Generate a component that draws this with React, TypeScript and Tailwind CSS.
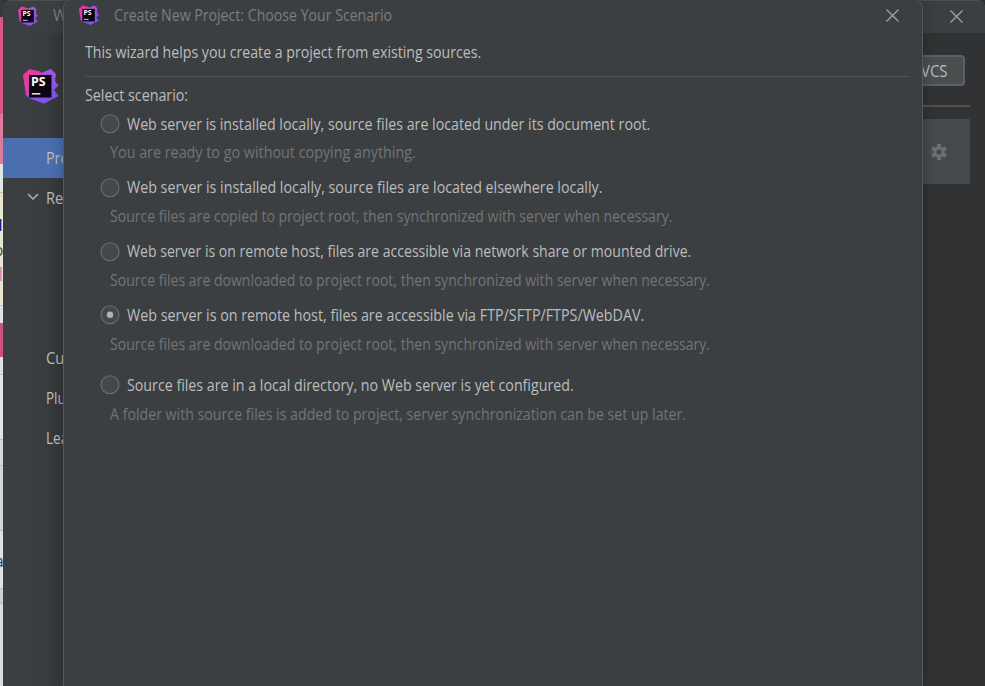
import React from 'react';

function Logo({ size }: { size: number }) {
  return (
    <svg width={size} height={size} viewBox="0 0 36 36" className="block shrink-0">
      <defs>
        <linearGradient id="psPink" x1="0" y1="0" x2="1" y2="1">
          <stop offset="0" stopColor="#f5358f" />
          <stop offset="0.45" stopColor="#dd3cb0" />
          <stop offset="1" stopColor="#8a4df5" />
        </linearGradient>
        <linearGradient id="psViolet" x1="0" y1="0" x2="0" y2="1">
          <stop offset="0" stopColor="#a955de" />
          <stop offset="1" stopColor="#6b57f5" />
        </linearGradient>
      </defs>
      <path d="M19 4.5 28 1 33 6 32 13 35.5 17.5 31 22 35.5 28 21 35.5 8 30 16 9Z" fill="url(#psViolet)" />
      <path d="M0 7 6.5 1 17 3.5 20 6 18 14 9 30.5 3 27.5Z" fill="url(#psPink)" />
      <path d="M3 27.5 18 24 35 28 21 35.5 8 31Z" fill="#8052ea" />
      <rect x="6" y="7" width="22.5" height="22.5" fill="#0c0512" />
      <rect x="8.8" y="25" width="8.5" height="1.6" fill="#dedede" />
      <text x="8" y="18" fontFamily="Open Sans, sans-serif" fontSize="12.4" fontWeight="700" fill="#fff">PS</text>
    </svg>
  );
}

function Close() {
  return (
    <svg width="13" height="13" viewBox="0 0 13 13" className="block shrink-0" stroke="#a6a8a9" strokeWidth="1.15">
      <path d="M.5.5 12.5 12.5M12.5.5.5 12.5" />
    </svg>
  );
}

const strip = [
  'h-[17px] bg-[#39393b]',
  'h-[97px] bg-[#da5488]',
  'h-[50px] bg-[#dc7ba0]',
  'h-[28px] bg-[#e3e5e4]',
  'h-px bg-[#bfc1c0]',
  'h-[112px] bg-[#e9e6d0]',
  'h-px bg-[#c0c2b8]',
  'h-[17px] bg-[#e0e3e2]',
  'h-[34px] bg-[#cf4f85]',
  'h-[17px] bg-[#dfe2e1]',
  'h-px bg-[#bcbebd]',
  'h-[64px] bg-[#e3e5e4]',
  'h-px bg-[#bcbebd]',
  'h-[25px] bg-[#d6d9d8]',
  'h-px bg-[#bcbebd]',
  'h-[64px] bg-[#d3d6d5]',
  'h-px bg-[#bcbebd]',
  'h-[57px] bg-[#e0e2e1]',
  'h-px bg-[#bcbebd]',
  'h-[14px] bg-[#cdd0cf]',
  'h-px bg-[#bcbebd]',
  'h-[82px] bg-[#d9dcdb]',
];

const scenarios = [
  { title: 'Web server is installed locally, source files are located under its document root.', note: 'You are ready to go without copying anything.', tw: 'w-[523px]', nw: 'mt-[8px] w-[306px]', gap: 'h-[64px]' },
  { title: 'Web server is installed locally, source files are located elsewhere locally.', note: 'Source files are copied to project root, then synchronized with server when necessary.', tw: '-mt-px w-[475px]', nw: 'mt-[8px] w-[562px]', gap: 'h-[64px]' },
  { title: 'Web server is on remote host, files are accessible via network share or mounted drive.', note: 'Source files are downloaded to project root, then synchronized with server when necessary.', tw: '-mt-px w-[564px]', nw: 'mt-[8px] w-[600px]', gap: 'h-[63px]' },
  { title: 'Web server is on remote host, files are accessible via FTP/SFTP/FTPS/WebDAV.', note: 'Source files are downloaded to project root, then synchronized with server when necessary.', tw: 'w-[517px]', nw: 'mt-[9px] w-[600px]', gap: 'h-[70px]', on: true },
  { title: 'Source files are in a local directory, no Web server is yet configured.', note: 'A folder with source files is added to project, server synchronization can be set up later.', tw: 'w-[447px]', nw: 'mt-[9px] w-[576px]', gap: 'h-[64px]' },
];

/* A single line of text, condensed to the width of its box. */
function Line({ children, className }: { children: string; className: string }) {
  const box = React.useRef<HTMLDivElement>(null);
  const text = React.useRef<HTMLSpanElement>(null);
  const [scale, setScale] = React.useState(1);
  React.useLayoutEffect(() => {
    if (box.current && text.current) {
      setScale(box.current.clientWidth / text.current.offsetWidth);
    }
  }, [children]);
  return (
    <div ref={box} className={`h-5 leading-5 whitespace-nowrap ${className}`}>
      <span ref={text} className="inline-block origin-left" style={{ transform: `scaleX(${scale})` }}>{children}</span>
    </div>
  );
}

function Radio({ on }: { on?: boolean }) {
  return (
    <svg width="20" height="20" viewBox="0 0 20 20" className="block shrink-0">
      <circle cx="10" cy="9.8" r="9" fill="#43494a" stroke="#6b6e6f" strokeWidth="1.1" />
      {on && <circle cx="10" cy="9.8" r="3.2" fill="#b0b2b3" />}
    </svg>
  );
}

export default function App() {
  return (
    <div className="relative flex h-[686px] w-[985px] overflow-hidden bg-[#303032] font-['Open_Sans','Noto_Sans',sans-serif] text-[15.5px] text-[#bbbdbe]">
      <div className="relative w-[3px] shrink-0 overflow-hidden">
        {strip.map((c, i) => <div key={i} className={c} />)}
        <span className="absolute top-[215px] -left-[12px] leading-5 font-bold text-[#20208a]">M</span>
        <span className="absolute top-[240px] -left-[6px] leading-5 text-[#444]">o</span>
        <div className="absolute top-[267px] left-0 h-[14px] w-[2px] bg-[#d995c0]" />
        <span className="absolute top-[551px] -left-[5px] leading-5 text-[#263b52]">a</span>
      </div>
      <div className="flex flex-1 flex-col overflow-hidden rounded-t-[8px] border-t border-[#4d4f50] bg-[#3c3f41]">
        <header className="flex h-8 shrink-0 items-center pl-[15px]">
          <div className="-mt-[2px]"><Logo size={20} /></div>
          <span className="-mt-[2px] ml-[15px] w-[10px] overflow-hidden text-[#7b7d7e]">W</span>
          <span className="flex-1" />
          <div className="-mt-[2px]"><Close /></div>
          <span className="w-[22px]" />
        </header>
        <div className="flex flex-1">
          <nav className="w-[250px] shrink-0 bg-linear-to-r from-[#3c3f41] from-10% to-[#35383a] to-25%">
            <div className="flex h-[105px] pt-[35px] pl-[20px]"><Logo size={36} /></div>
            <div className="h-10 bg-[#4b6eaf] pt-[10px] pl-[43px]"><Line className="w-[23px]">Pro</Line></div>
            <div className="flex h-10 items-center pl-[24px]">
              <svg width="12" height="8" viewBox="0 0 12 8" fill="none" stroke="#b0b2b3" strokeWidth="1.5" className="-mt-[3px] mr-[7px]"><path d="m1 1 5 5 5-5" /></svg>
              <Line className="w-[17px]">Re</Line>
            </div>
            <div className="mt-[120px] h-10 pt-[10px] pl-[43px]"><Line className="w-[18px]">Cu</Line></div>
            <div className="h-10 pt-[10px] pl-[43px]"><Line className="w-[20px]">Plu</Line></div>
            <div className="h-10 pt-[10px] pl-[43px]"><Line className="w-[22px]">Lea</Line></div>
          </nav>
          <main className="flex-1 bg-[#313234] pt-[22px] pr-[15px]">
            <div className="mr-[5px] ml-auto flex h-[31px] w-[120px] items-center justify-end rounded-[4px] border-2 border-[#5d6062] bg-[#4a4e50] pr-[15px]">
              <Line className="w-[27px]">VCS</Line>
            </div>
            <div className="mt-[19px] h-[2px] bg-[#505254]" />
            <div className="mt-[12px] flex h-[65px] items-center justify-end bg-[#46494b] pr-[22px]">
              <svg width="18" height="18" viewBox="0 0 18 18" className="text-[#687274]">
                <g fill="currentColor">
                  <rect x="7" y="1" width="4" height="16" />
                  <rect x="7" y="1" width="4" height="16" transform="rotate(60 9 9)" />
                  <rect x="7" y="1" width="4" height="16" transform="rotate(120 9 9)" />
                  <circle cx="9" cy="9" r="5.8" />
                </g>
                <circle cx="9" cy="9" r="2.6" fill="#46494b" />
              </svg>
            </div>
          </main>
        </div>
      </div>

      <section className="absolute top-0 left-[63px] flex h-[686px] w-[860px] flex-col rounded-t-[8px] border-x border-[#55585a] bg-[#3c3f41] shadow-[0_0_14px_rgba(0,0,0,0.25)]">
        <header className="flex h-[30px] shrink-0 items-center pr-[23px] pl-[15px]">
          <div className="-mt-px"><Logo size={20} /></div>
          <Line className="ml-[15px] w-[278px] text-[#7b7d7e]">Create New Project: Choose Your Scenario</Line>
          <span className="flex-1" />
          <Close />
        </header>
        <div className="pt-[12px] pr-[14px] pl-[21px]">
          <Line className="w-[396px]">This wizard helps you create a project from existing sources.</Line>
          <div className="mt-[14px] h-px bg-[#555759]" />
          <Line className="mt-[8px] w-[103px]">Select scenario:</Line>
          <div className="mt-[9px] pl-[15px]">
            {scenarios.map((s) => (
              <div key={s.title} className={s.gap}>
                <div className="flex h-5 items-start">
                  <Radio on={s.on} />
                  <Line className={`ml-[7px] ${s.tw}`}>{s.title}</Line>
                </div>
                <Line className={`ml-[10px] text-[#727476] ${s.nw}`}>{s.note}</Line>
              </div>
            ))}
          </div>
        </div>
      </section>
    </div>
  );
}
